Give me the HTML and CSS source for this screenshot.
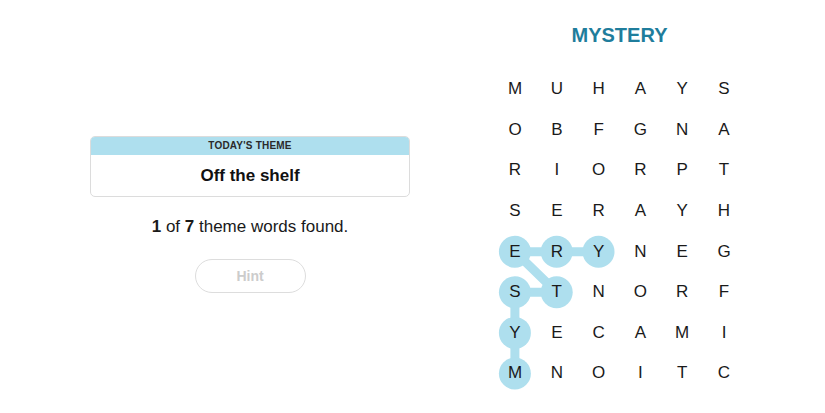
FILE: index.html
```html
<!DOCTYPE html>
<html lang="en">
<head>
<meta charset="UTF-8">
<meta name="viewport" content="width=device-width, initial-scale=1.0">
<title>Strands</title>
<link rel="stylesheet" href="styles.css">
</head>
<body>

<div class="game">
    <div class="side">
        <div class="theme-card">
            <div class="theme-label">TODAY'S THEME</div>
            <div class="theme-text">Off the shelf</div>
        </div>
        <p class="progress"><b>1</b> of <b>7</b> theme words found.</p>
        <button class="hint" disabled>Hint</button>
    </div>

    <div class="board-col">
        <div class="found-word">MYSTERY</div>
        <div class="board">
            <!-- highlight for the found word, drawn under the letters -->
            <svg class="trail" viewBox="0 0 250.8 324.8" width="250.8" height="324.8">
                <g stroke="#aedfee" stroke-width="9" stroke-linecap="round" fill="none">
                    <polyline points="20.9,304.5 20.9,263.9 20.9,223.3 62.7,223.3 20.9,182.7 62.7,182.7 104.5,182.7"/>
                </g>
                <g fill="#aedfee">
                    <circle cx="20.9" cy="304.5" r="16"/>
                    <circle cx="20.9" cy="263.9" r="16"/>
                    <circle cx="20.9" cy="223.3" r="16"/>
                    <circle cx="62.7" cy="223.3" r="16"/>
                    <circle cx="20.9" cy="182.7" r="16"/>
                    <circle cx="62.7" cy="182.7" r="16"/>
                    <circle cx="104.5" cy="182.7" r="16"/>
                </g>
            </svg>
            <span>M</span><span>U</span><span>H</span><span>A</span><span>Y</span><span>S</span>
            <span>O</span><span>B</span><span>F</span><span>G</span><span>N</span><span>A</span>
            <span>R</span><span>I</span><span>O</span><span>R</span><span>P</span><span>T</span>
            <span>S</span><span>E</span><span>R</span><span>A</span><span>Y</span><span>H</span>
            <span>E</span><span>R</span><span>Y</span><span>N</span><span>E</span><span>G</span>
            <span>S</span><span>T</span><span>N</span><span>O</span><span>R</span><span>F</span>
            <span>Y</span><span>E</span><span>C</span><span>A</span><span>M</span><span>I</span>
            <span>M</span><span>N</span><span>O</span><span>I</span><span>T</span><span>C</span>
        </div>
    </div>
</div>

</body>
</html>
```

FILE: styles.css
```css
body {
    margin: 0;
    padding: 0;
    background-color: #ffffff;
    color: #121212;
    font-family: "Liberation Sans", Arial, sans-serif;
}

.game {
    display: flex;
}

.side {
    box-sizing: border-box;
    width: 494px;
    padding-top: 136px;
    padding-left: 6px;
    display: flex;
    flex-direction: column;
    align-items: center;
}

.theme-card {
    box-sizing: border-box;
    width: 320px;
    border: 1px solid #dcdcdc;
    border-radius: 5px;
    overflow: hidden;
}

.theme-label {
    height: 18px;
    line-height: 18px;
    background-color: #aedfee;
    text-align: center;
    font-size: 10px;
    font-weight: bold;
    letter-spacing: 0.2px;
    color: #2a2a2a;
}

.theme-text {
    height: 41px;
    line-height: 41px;
    text-align: center;
    font-size: 17px;
    font-weight: bold;
    color: #111111;
}

.progress {
    margin: 20px 0 0 0;
    line-height: 20px;
    font-size: 17px;
    color: #1a1a1a;
}

.hint {
    margin-top: 22px;
    width: 111px;
    height: 34px;
    border: 1.5px solid #dddddd;
    border-radius: 17px;
    background: #ffffff;
    font-family: "Liberation Sans", Arial, sans-serif;
    font-size: 14px;
    font-weight: bold;
    color: #cccccc;
}

.board-col {
    width: 251px;
    padding-top: 23px;
    display: flex;
    flex-direction: column;
    align-items: center;
}

.found-word {
    height: 24px;
    line-height: 24px;
    font-size: 20px;
    font-weight: bold;
    color: #1f7d9c;
}

.board {
    position: relative;
    margin-top: 22px;
    display: grid;
    grid-template-columns: repeat(6, 41.8px);
    grid-template-rows: repeat(8, 40.6px);
}

.trail {
    position: absolute;
    top: 0;
    left: 0;
}

.board span {
    position: relative;
    display: flex;
    align-items: center;
    justify-content: center;
    font-size: 17px;
    color: #1a1a1a;
}
```
